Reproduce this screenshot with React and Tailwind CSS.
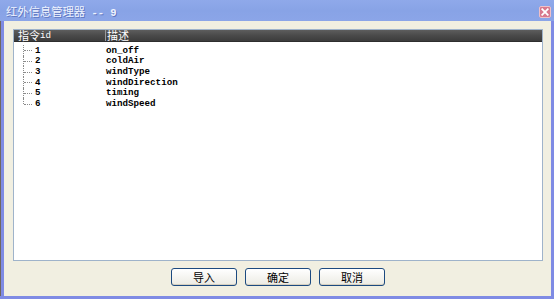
import React from "react";

const rows = [
  ["1", "on_off"],
  ["2", "coldAir"],
  ["3", "windType"],
  ["4", "windDirection"],
  ["5", "timing"],
  ["6", "windSpeed"],
];

const cjk = { fontFamily: '"Noto Sans CJK SC", "Noto Sans", sans-serif' };
const mono = { fontFamily: '"Liberation Mono", "DejaVu Sans Mono", monospace' };

function Btn({ label }) {
  return (
    <div
      className="w-[66px] h-[18px] rounded-[3px] border border-[#1c4a80] bg-gradient-to-b from-[#ffffff] to-[#ecebe3] flex items-center justify-center text-[11px] leading-none text-black shadow-[inset_0_-1px_0_#d6d0c0]"
      style={cjk}
    >
      {label}
    </div>
  );
}

export default function App() {
  return (
    <div className="w-[554px] h-[299px] flex flex-col bg-[#7f8be4] overflow-hidden">
      {/* title bar */}
      <div className="h-[21px] flex items-center bg-gradient-to-b from-[#8fa9ea] via-[#88a3e6] to-[#8ba5e8] pl-[6px] pr-[3px] shrink-0">
        <div className="flex items-baseline text-[#eef3ff] [text-shadow:1px_1px_0_#6077bf] pt-[3px]">
          <span className="text-[11.3px] leading-none" style={cjk}>
            红外信息管理器
          </span>
          <span className="text-[10.5px] leading-none whitespace-pre font-bold" style={mono}>
            {" -- 9"}
          </span>
        </div>
        <div className="flex-1" />
        <div className="w-[12px] h-[12px] mt-[2px] rounded-[2px] bg-[#d8798d] border border-[#f0c0c8] flex items-center justify-center">
          <svg width="8" height="8" viewBox="0 0 8 8">
            <path d="M1.2 1.2 L6.8 6.8 M6.8 1.2 L1.2 6.8" stroke="#fff" strokeWidth="1.8" strokeLinecap="square" />
          </svg>
        </div>
      </div>
      {/* body */}
      <div className="flex flex-1 min-h-0">
        <div className="w-px bg-[#6f675f]" />
        <div className="w-[3px] bg-[#7f8be4]" />
        <div className="flex-1 bg-[#f1efe1] flex flex-col pl-[9px] pr-[8px] pt-[8px]">
          {/* list box */}
          <div className="h-[232px] border border-[#9fb3ca] bg-white flex flex-col">
            <div className="h-[12px] flex bg-gradient-to-b from-[#5d5d5d] via-[#4a4a4a] to-[#3c3c3c] border-b border-[#2e2e2e] text-white">
              <div className="w-[92px] flex items-center pl-[4px] border-r border-[#9a9a9a]">
                <span className="text-[11px] leading-none" style={cjk}>指令</span>
                <span className="text-[9.2px] leading-none" style={mono}>id</span>
              </div>
              <div className="flex-1 flex items-center pl-[1px]">
                <span className="text-[11px] leading-none" style={cjk}>描述</span>
              </div>
            </div>
            <div className="pt-[3px] flex flex-col">
              {rows.map(([id, desc], i) => (
                <div key={id} className="h-[10.7px] flex items-center text-black" style={mono}>
                  <div className="w-[9px]" />
                  <div className="relative w-[12px] h-full">
                    <div
                      className={
                        i === rows.length - 1
                          ? "absolute left-0 top-0 h-1/2 border-l border-dotted border-[#8a8a8a]"
                          : "absolute left-0 top-0 h-full border-l border-dotted border-[#8a8a8a]"
                      }
                    />
                    <div className="absolute left-[1px] top-1/2 w-[8px] border-t border-dotted border-[#8a8a8a]" />
                  </div>
                  <div className="w-[71px] text-[9.2px] leading-none font-bold">{id}</div>
                  <div className="text-[9.2px] leading-none font-bold">{desc}</div>
                </div>
              ))}
            </div>
          </div>
          {/* buttons */}
          <div className="flex justify-center gap-[8px] pt-[7px]">
            <Btn label="导入" />
            <Btn label="确定" />
            <Btn label="取消" />
          </div>
        </div>
        <div className="w-[3px] bg-[#7f8be4]" />
      </div>
      <div className="h-[3px] bg-[#7f8be4] shrink-0" />
    </div>
  );
}
